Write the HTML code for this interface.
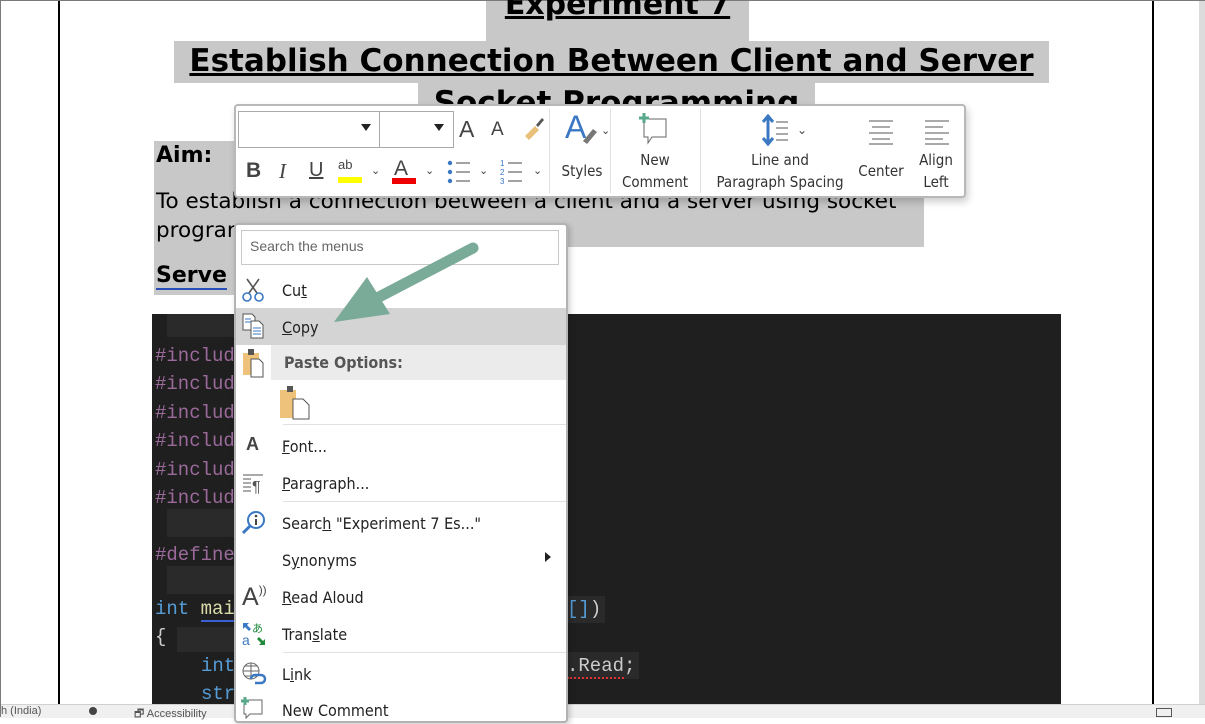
<!DOCTYPE html>
<html><head><meta charset="utf-8"><style>
*{margin:0;padding:0;box-sizing:border-box}
body{width:1205px;height:717px;position:relative;overflow:hidden;background:#fff;font-family:"Liberation Sans",sans-serif;border:1px solid #7a7a7a}
.a{position:absolute}
.sel{background:#c8c8c8}
.h{font-family:"DejaVu Sans","Liberation Sans",sans-serif;font-weight:bold;text-decoration:underline;color:#000;white-space:nowrap}
.code{font-family:"Liberation Mono",monospace;font-size:19px;white-space:pre;color:#9b6a9b}
.m{font-family:"DejaVu Sans Condensed","Liberation Sans Narrow","Liberation Sans",sans-serif;font-size:16px;color:#222;white-space:nowrap}
.tb{font-family:"DejaVu Sans Condensed","Liberation Sans Narrow","Liberation Sans",sans-serif;font-size:15px;color:#333;text-align:center;line-height:22px;white-space:nowrap}
.sep{position:absolute;height:1px;background:#e1e1e1}
</style></head><body>
<div class="a" style="left:57px;top:0;width:2px;height:703px;background:#000"></div>
<div class="a" style="left:1151px;top:0;width:2px;height:703px;background:#000"></div>
<div class="a" style="left:1198px;top:0;width:6px;height:703px;background:#dcdcdc"></div>

<!-- headings -->
<div class="a sel" style="left:485px;top:0;width:263px;height:40px"></div>
<div class="a h" style="left:485px;top:-14px;width:263px;text-align:center;font-size:30px">Experiment 7</div>
<div class="a sel" style="left:173px;top:40px;width:875px;height:42px"></div>
<div class="a h" style="left:173px;top:42px;width:875px;text-align:center;font-size:31px">Establish Connection Between Client and Server</div>
<div class="a sel" style="left:417px;top:82px;width:397px;height:30px"></div>
<div class="a h" style="left:417px;top:84px;width:397px;text-align:center;font-size:31px">Socket Programming</div>

<div class="a sel" style="left:153px;top:140px;width:770px;height:106px"></div>
<div class="a sel" style="left:153px;top:246px;width:80px;height:48px"></div>
<div class="a h" style="left:155px;top:142px;font-size:22px;text-decoration:none">Aim:</div>
<div class="a" style="left:155px;top:188px;font-family:'DejaVu Sans',sans-serif;font-size:21.5px;color:#000;white-space:nowrap">To establish a connection between a client and a server using socket</div>
<div class="a" style="left:155px;top:217px;font-family:'DejaVu Sans',sans-serif;font-size:21.5px;color:#000">program</div>
<div class="a h" style="left:155px;top:262px;font-size:22px;text-decoration:none;border-bottom:2px solid #2b4fb8">Serve</div>

<!-- code block -->
<div class="a" style="left:151px;top:313px;width:909px;height:390px;background:#1f1f1f"></div>
<div class="a" style="left:166px;top:313px;width:70px;height:23px;background:#2a2a2a"></div>
<div class="a" style="left:166px;top:508px;width:70px;height:28px;background:#2a2a2a"></div>
<div class="a" style="left:166px;top:565px;width:70px;height:28px;background:#2a2a2a"></div>
<div class="a" style="left:176px;top:626px;width:70px;height:25px;background:#2a2a2a"></div>
<div class="a" style="left:566px;top:595px;width:38px;height:27px;background:#2a2a2a"></div>
<div class="a" style="left:566px;top:651px;width:72px;height:27px;background:#2a2a2a"></div>
<div class="a code" style="left:154px;top:341px;line-height:28.4px">#include
#include
#include
#include
#include
#include

#define</div>
<div class="a code" style="left:154px;top:597px;color:#569cd6">int <span style="color:#dcdcaa;border-bottom:2px solid #3b5fd0">main</span></div>
<div class="a code" style="left:154px;top:625px;color:#ccc">{</div>
<div class="a code" style="left:200px;top:654px;color:#569cd6">int</div>
<div class="a code" style="left:200px;top:682px;color:#569cd6">str</div>
<div class="a code" style="left:566px;top:597px;color:#569cd6">[]<span style="color:#ccc">)</span></div>
<div class="a code" style="left:566px;top:654px;color:#ccc"><span style="border-bottom:2px dotted #e03030">.Read</span>;</div>

<!-- status bar -->
<div class="a" style="left:0;top:703px;width:1205px;height:14px;background:#f0f0f0;border-top:1px solid #d0d0d0"></div>
<div class="a" style="left:0;top:704px;font-size:11px;color:#555">h (India)</div>
<div class="a" style="left:88px;top:706px;width:8px;height:8px;border-radius:4px;background:#444"></div>
<div class="a" style="left:133px;top:704px;font-size:11px;color:#555">🗗 Accessibility</div>
<div class="a" style="left:1155px;top:707px;width:16px;height:9px;border:1px solid #555"></div>

<!-- toolbar -->
<div class="a" style="left:233px;top:103px;width:732px;height:94px;background:#fff;border:2px solid #b8b8b8;border-radius:4px;box-shadow:2px 4px 8px rgba(0,0,0,.2)"></div>
<div class="a" style="left:237px;top:110px;width:142px;height:37px;border:1px solid #aaa"></div>
<div class="a" style="left:379px;top:110px;width:74px;height:37px;border:1px solid #aaa;border-left:none"></div>
<div class="a" style="left:360px;top:123px;border:5px solid transparent;border-top:7px solid #222"></div>
<div class="a" style="left:433px;top:123px;border:5px solid transparent;border-top:7px solid #222"></div>
<div class="a" style="left:458px;top:115px;font-size:23px;color:#444;font-family:'Liberation Sans Narrow',sans-serif">A</div>
<div class="a" style="left:490px;top:118px;font-size:19px;color:#444;font-family:'Liberation Sans Narrow',sans-serif">A</div>
<svg class="a" style="left:518px;top:113px" width="28" height="28"><path d="M6 22l10-10 4 4-10 10z" fill="#e9c07a"/><path d="M17 11l6-7 2 2-6 7z" fill="#555"/></svg>
<div class="a" style="left:245px;top:158px;font-size:21px;font-weight:bold;color:#444">B</div>
<div class="a" style="left:278px;top:158px;font-size:21px;font-style:italic;color:#444;font-family:'Liberation Serif',serif">I</div>
<div class="a" style="left:308px;top:158px;font-size:20px;text-decoration:underline;color:#444">U</div>
<div class="a" style="left:337px;top:156px;font-size:13px;color:#444">ab</div>
<div class="a" style="left:337px;top:176px;width:24px;height:6px;background:#ffff00"></div>
<div class="a" style="left:370px;top:163px;font-size:11px;color:#444">⌄</div>
<div class="a" style="left:393px;top:156px;font-size:21px;color:#444">A</div>
<div class="a" style="left:391px;top:177px;width:24px;height:6px;background:#e00"></div>
<div class="a" style="left:424px;top:163px;font-size:11px;color:#444">⌄</div>
<svg class="a" style="left:445px;top:158px" width="30" height="26"><g fill="#3b78c4"><circle cx="4" cy="4" r="2.2"/><circle cx="4" cy="13" r="2.2"/><circle cx="4" cy="22" r="2.2"/></g><g stroke="#444"><path d="M10 4h14M10 13h14M10 22h14"/></g></svg>
<div class="a" style="left:478px;top:163px;font-size:11px;color:#444">⌄</div>
<svg class="a" style="left:498px;top:158px" width="30" height="26"><g fill="#3b78c4" font-size="8"><text x="1" y="7">1</text><text x="1" y="16">2</text><text x="1" y="25">3</text></g><g stroke="#444"><path d="M9 4h14M9 13h14M9 22h14"/></g></svg>
<div class="a" style="left:532px;top:163px;font-size:11px;color:#444">⌄</div>
<div class="a" style="left:548px;top:108px;width:1px;height:84px;background:#e0e0e0"></div>
<div class="a" style="left:564px;top:108px;font-size:32px;color:#3b78c4;font-family:'Liberation Sans Narrow',sans-serif">A</div>
<svg class="a" style="left:580px;top:118px" width="24" height="26"><path d="M2 22l10-12 4 3-10 12z" fill="#777"/></svg>
<div class="a" style="left:600px;top:123px;font-size:11px;color:#444">⌄</div>
<div class="a tb" style="left:557px;top:159px;width:48px">Styles</div>
<div class="a" style="left:609px;top:108px;width:1px;height:84px;background:#e0e0e0"></div>
<svg class="a" style="left:637px;top:112px" width="34" height="34"><path d="M6 6h22v18H14l-4 6v-6H6z" fill="#fff" stroke="#666"/><path d="M6 0v10M1 5h10" stroke="#5aa88c" stroke-width="3"/></svg>
<div class="a tb" style="left:612px;top:148px;width:84px">New<br>Comment</div>
<div class="a" style="left:699px;top:108px;width:1px;height:84px;background:#e0e0e0"></div>
<svg class="a" style="left:760px;top:113px" width="50" height="34"><path d="M7 2v28M2 8l5-6 5 6M2 24l5 6 5-6" stroke="#3b78c4" stroke-width="3" fill="none"/><path d="M15 8h12M15 14h12M15 20h12M15 26h12" stroke="#555"/><text x="36" y="20" font-size="12" fill="#444">⌄</text></svg>
<div class="a tb" style="left:704px;top:148px;width:150px">Line and<br>Paragraph Spacing</div>
<svg class="a" style="left:866px;top:118px" width="28" height="26"><path d="M2 2h24M5 8h18M2 14h24M5 20h18M2 25h24" stroke="#555"/></svg>
<div class="a tb" style="left:852px;top:159px;width:56px">Center</div>
<svg class="a" style="left:922px;top:118px" width="28" height="26"><path d="M2 2h24M2 8h18M2 14h24M2 20h18M2 25h24" stroke="#555"/></svg>
<div class="a tb" style="left:910px;top:148px;width:50px">Align<br>Left</div>

<!-- context menu -->
<div class="a" style="left:233px;top:222px;width:334px;height:500px;background:#fff;border:2px solid #b3b3b3;border-radius:4px;box-shadow:2px 2px 6px rgba(0,0,0,.2)"></div>
<div class="a" style="left:240px;top:229px;width:318px;height:35px;border:1px solid #c8c8c8"></div>
<div class="a" style="left:249px;top:237px;font-size:14px;color:#666">Search the menus</div>
<svg class="a" style="left:240px;top:276px" width="24" height="26"><path d="M6 2l10 14M18 2L8 16" stroke="#555" stroke-width="1.6"/><circle cx="6" cy="20" r="4" fill="none" stroke="#3b78c4" stroke-width="1.6"/><circle cx="18" cy="20" r="4" fill="none" stroke="#3b78c4" stroke-width="1.6"/></svg>
<div class="a m" style="left:281px;top:280px">Cu<u>t</u></div>
<div class="a" style="left:235px;top:307px;width:330px;height:37px;background:#d4d4d4"></div>
<svg class="a" style="left:240px;top:312px" width="26" height="26"><path d="M2 1h9l3 3v13H2z" fill="#fff" stroke="#555"/><path d="M10 8h8l4 4v13H10z" fill="#fff" stroke="#555"/><path d="M4 6h6M4 9h6M12 15h8M12 18h8M12 21h8" stroke="#3b78c4"/></svg>
<div class="a m" style="left:281px;top:317px"><u>C</u>opy</div>
<div class="a" style="left:270px;top:344px;width:295px;height:35px;background:#ebebeb"></div>
<svg class="a" style="left:240px;top:347px" width="26" height="30"><rect x="2" y="5" width="16" height="22" fill="#eec27a"/><rect x="7" y="1" width="6" height="6" fill="#555"/><path d="M10 11h8l4 4v14H10z" fill="#fff" stroke="#555"/></svg>
<div class="a m" style="left:283px;top:352px;font-weight:bold;color:#555">Paste Options:</div>
<svg class="a" style="left:277px;top:384px" width="36" height="36"><rect x="2" y="5" width="16" height="28" fill="#eec27a"/><rect x="9" y="1" width="6" height="6" fill="#555"/><path d="M15 14h10l6 6v14H15z" fill="#fff" stroke="#555"/></svg>
<div class="sep" style="left:282px;top:423px;width:283px"></div>
<div class="a" style="left:245px;top:433px;font-size:18px;font-weight:bold;color:#444">A</div>
<div class="a m" style="left:281px;top:436px"><u>F</u>ont...</div>
<svg class="a" style="left:240px;top:470px" width="24" height="24"><path d="M2 4h20M2 8h8M2 12h8M2 16h8M2 20h8" stroke="#555"/><text x="11" y="21" font-size="16" fill="#555">¶</text></svg>
<div class="a m" style="left:281px;top:473px"><u>P</u>aragraph...</div>
<div class="sep" style="left:282px;top:500px;width:283px"></div>
<svg class="a" style="left:240px;top:509px" width="26" height="26"><circle cx="15" cy="10" r="8" fill="none" stroke="#3b78c4" stroke-width="2"/><path d="M9 16l-7 7" stroke="#3b78c4" stroke-width="3"/><path d="M15 9v6" stroke="#444" stroke-width="2"/><circle cx="15" cy="6" r="1.3" fill="#444"/></svg>
<div class="a m" style="left:281px;top:513px">Searc<u>h</u> "Experiment 7 Es..."</div>
<div class="a m" style="left:281px;top:550px">S<u>y</u>nonyms</div>
<div class="a" style="left:544px;top:551px;border:5px solid transparent;border-left:6px solid #222"></div>
<div class="a" style="left:241px;top:582px;font-size:25px;color:#444">A<span style="font-size:12px;vertical-align:top">))</span></div>
<div class="a m" style="left:281px;top:587px"><u>R</u>ead Aloud</div>
<svg class="a" style="left:240px;top:620px" width="26" height="26"><path d="M2 2h6l-2 2 4 4-2 2-4-4-2 2z" fill="#3b78c4"/><text x="11" y="11" font-size="11" fill="#1e8a3a" font-family="Noto Sans CJK JP,sans-serif">あ</text><text x="1" y="24" font-size="14" fill="#3b78c4">a</text><path d="M24 24h-6l2-2-4-4 2-2 4 4 2-2z" fill="#1e8a3a"/></svg>
<div class="a m" style="left:281px;top:624px">Tran<u>s</u>late</div>
<div class="sep" style="left:282px;top:651px;width:283px"></div>
<svg class="a" style="left:240px;top:660px" width="26" height="26"><circle cx="10" cy="10" r="8" fill="none" stroke="#666"/><path d="M2 10h16M10 2v16M4 5h12M4 15h12" stroke="#666"/><path d="M10 18a4 4 0 0 1 4-4h6a4 4 0 0 1 0 8h-6" fill="none" stroke="#3b78c4" stroke-width="2.5"/></svg>
<div class="a m" style="left:281px;top:664px">L<u>i</u>nk</div>
<svg class="a" style="left:239px;top:696px" width="26" height="22"><path d="M4 3h18v14H10l-4 4v-4H4z" fill="#fff" stroke="#666"/><path d="M5 0v8M1 4h8" stroke="#5aa88c" stroke-width="3"/></svg>
<div class="a m" style="left:281px;top:700px">New Comment</div>

<!-- arrow -->
<svg class="a" style="left:0;top:0" width="1205" height="717"><path d="M472 247L378 296" stroke="#7aaa98" stroke-width="11" stroke-linecap="round"/><path d="M333 321L366 276L389 313Z" fill="#7aaa98"/></svg>
</body></html>
